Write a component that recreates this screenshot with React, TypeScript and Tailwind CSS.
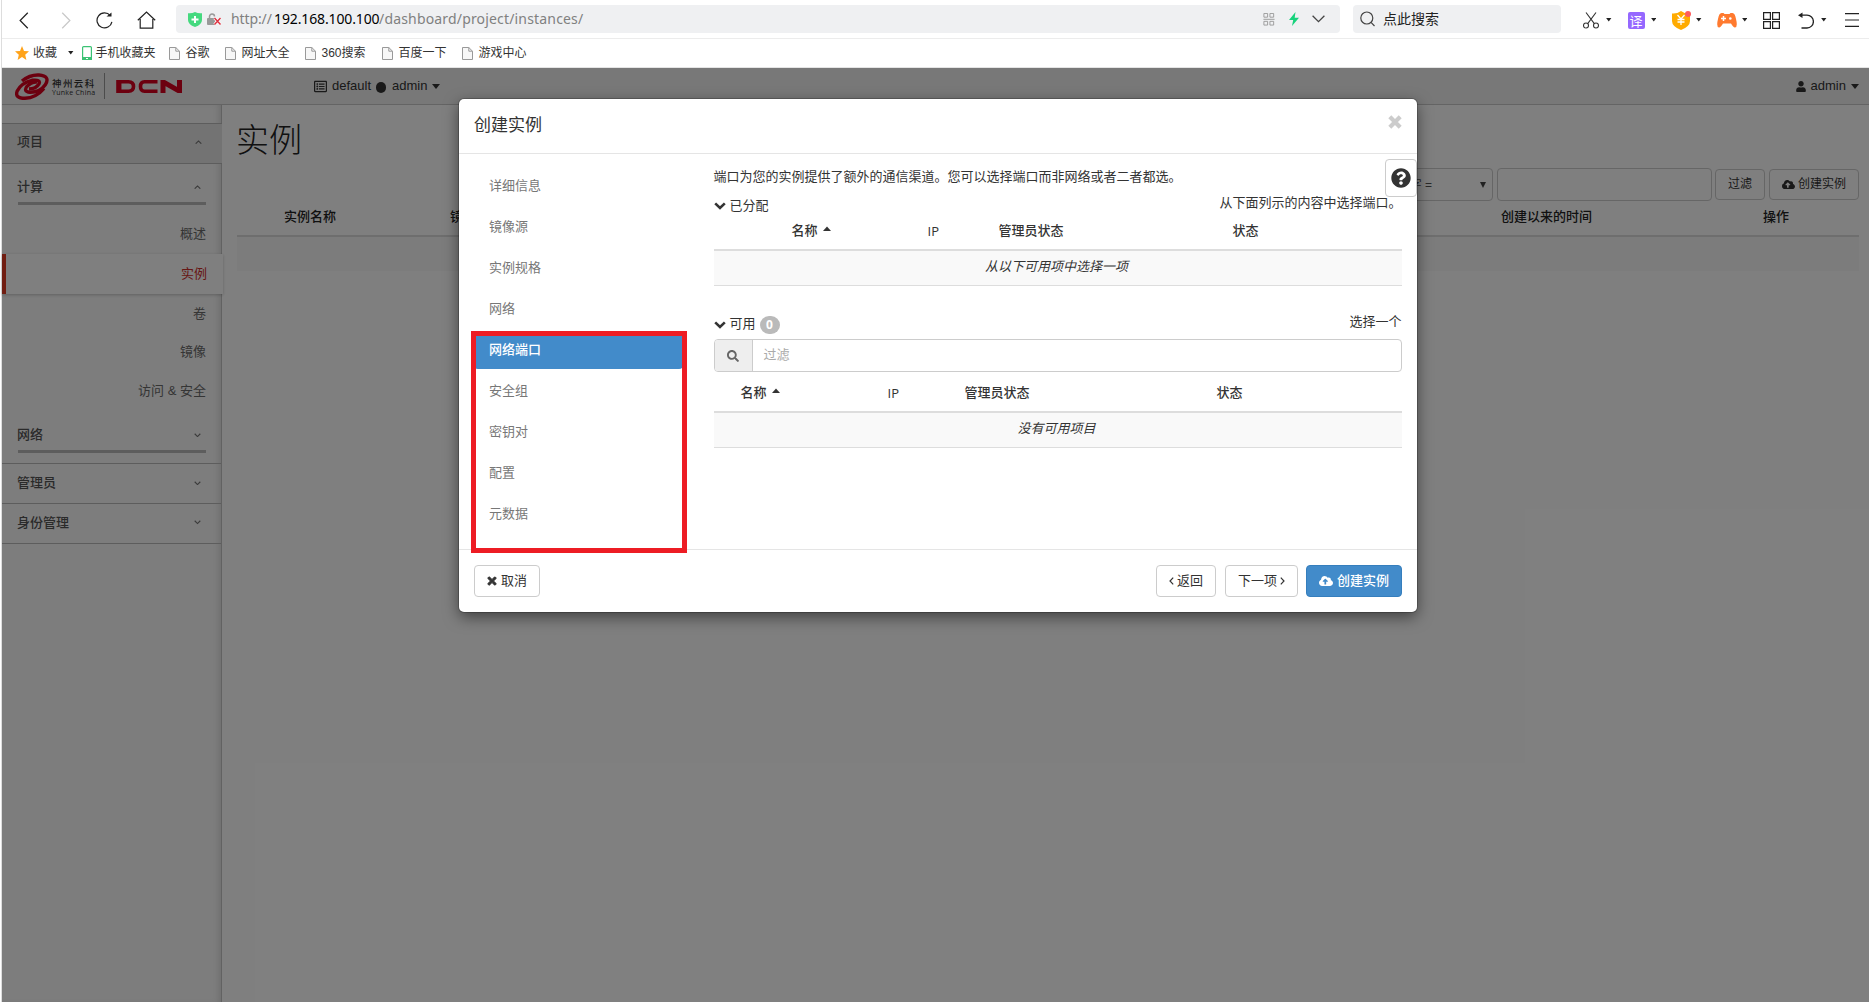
import React from "react";
import {
  FaCloudUploadAlt,
  FaUser,
  FaQuestionCircle,
  FaSearch,
  FaTimes,
  FaRegListAlt,
} from "react-icons/fa";

const CJK = "font-['Liberation_Sans','Noto_Sans_CJK_SC',sans-serif]";

function Caret({ className = "" }: { className?: string }) {
  return (
    <svg viewBox="0 0 6 4" className={`h-[3.5px] w-[5.5px] shrink-0 ${className}`}>
      <path d="M0 0h6L3 4z" fill="#222" />
    </svg>
  );
}

function DocIcon({ className = "" }: { className?: string }) {
  return (
    <svg viewBox="0 0 11 13" className={`h-[13px] w-[11px] shrink-0 ${className}`} fill="#f7f7f7" stroke="#999">
      <path d="M.5.5h6.3l3.7 3.7v8.3H.5z" />
      <path d="M6.8.5v3.7h3.7" fill="none" />
    </svg>
  );
}

function Chevron({ up = false }: { up?: boolean }) {
  return (
    <svg viewBox="0 0 8 5" className="h-[4.5px] w-[7px] shrink-0" fill="none" stroke="#777" strokeWidth="1.3">
      <path d={up ? "M.8 4.2 4 1l3.2 3.2" : "M.8.8 4 4 7.2.8"} />
    </svg>
  );
}

function BoldChevron() {
  return (
    <svg viewBox="0 0 12 8" className="h-[8px] w-[12px] shrink-0" fill="none" stroke="#333" strokeWidth="2.6">
      <path d="M1.2 1.4 6 6l4.8-4.6" />
    </svg>
  );
}

function SortCaret() {
  return (
    <svg viewBox="0 0 8 5" className="mb-[5px] ml-[5px] h-[5px] w-[8px] shrink-0">
      <path d="M0 5 4 .5 8 5z" fill="#333" />
    </svg>
  );
}

function AddressBar() {
  return (
    <div className="flex h-[39px] items-start border-b border-[#ececec] bg-white">
      <svg viewBox="0 0 10 18" className="ml-[17px] mt-[12px] h-[17px] w-[10px]" fill="none" stroke="#222" strokeWidth="1.3">
        <path d="M9 .8.9 9 9 17.2" />
      </svg>
      <svg viewBox="0 0 10 18" className="ml-[32px] mt-[12px] h-[17px] w-[10px]" fill="none" stroke="#c8c8c8" strokeWidth="1.3">
        <path d="M1 .8 9.1 9 1 17.2" />
      </svg>
      <svg viewBox="0 0 17 17" className="ml-[25px] mt-[12px] h-[17px] w-[17px]" fill="none" stroke="#222" strokeWidth="1.2">
        <path d="M15.9 9.8A7.5 7.5 0 1 1 14.3 3.6" />
        <path d="M10.5 4.6h5V.6z" fill="#222" stroke="none" />
      </svg>
      <svg viewBox="0 0 19 18" className="ml-[24px] mt-[11px] h-[18px] w-[19px]" fill="none" stroke="#222" strokeWidth="1.2">
        <path d="M.8 9.3 9.5 1l8.7 8.3M3.2 8v9.2h12.6V8" />
      </svg>

      <div className="ml-[20px] mt-[5px] flex h-[28px] w-[1164px] items-center rounded-[4px] bg-[#eff0f2]">
        <svg viewBox="0 0 14 15" className="ml-[12px] h-[15px] w-[14px]">
          <path d="M0 1.2Q4 1.6 7 0q3 1.6 7 1.2V8q0 4.500-7 7-7-2.500-7-7z" fill="#45d97f" />
          <path d="M7 4v7M3.500 7.500h7" stroke="#fff" strokeWidth="2" />
        </svg>
        <svg viewBox="0 0 15 13" className="ml-[5px] h-[13px] w-[15px]">
          <path d="M2.500 6V3.500a2.500 2.500 0 0 1 5 0" fill="none" stroke="#999" strokeWidth="1.500" />
          <rect x="0" y="5" width="8" height="7" rx="1" fill="#999" />
          <path d="m7.500 5 6 6.500m0-6.500-6 6.500" stroke="#f7f7f7" strokeWidth="3" />
          <path d="m7.500 5 6 6.500m0-6.500-6 6.500" stroke="#e03040" strokeWidth="1.400" />
        </svg>
        <div className="ml-[9px] mt-[-1px] flex w-[780px] whitespace-nowrap font-['Noto_Sans',sans-serif] text-[14px] leading-[20px] text-[#808080]">
          <span className="w-[43px] tracking-[-0.1px]">http://</span>
          <span className="w-[105px] tracking-[-0.13px] text-black">192.168.100.100</span>
          <span className="tracking-[0.17px]">/dashboard/project/instances/</span>
        </div>
        <svg viewBox="0 0 12 14" className="ml-auto h-[13px] w-[12px]" fill="none" stroke="#999">
          <path d="M.5.500h4v4h-4zM7 .500h4v4H7zM.500 9h4v4h-4zM7 9h4v4H7zM0 6.800h12" />
        </svg>
        <svg viewBox="0 0 10 14" className="ml-[14px] h-[14px] w-[10px]">
          <path d="M6.500 0 0 8h4.200L3 14l7-8.300H5.700z" fill="#17d27c" />
        </svg>
        <svg viewBox="0 0 13 8" className="ml-[13px] mr-[15px] h-[8px] w-[13px]" fill="none" stroke="#444" strokeWidth="1.300">
          <path d="m.6.8 5.900 5.900L12.400.8" />
        </svg>
      </div>

      <div className="ml-[13px] mt-[5px] flex h-[28px] w-[208px] items-center rounded-[4px] bg-[#eff0f2]">
        <svg viewBox="0 0 15 16" className="ml-[7px] h-[16px] w-[15px]" fill="none" stroke="#444" strokeWidth="1.200">
          <circle cx="6.800" cy="7" r="6" />
          <path d="m11 11.300 3.500 3.700" />
        </svg>
        <span className={`ml-[8px] text-[14px] leading-[20px] text-[#222] ${CJK}`}>点此搜索</span>
      </div>

      <div className="mt-[3px] flex h-[34px] items-center">
        <svg viewBox="0 0 16 17" className="ml-[22px] h-[17px] w-[16px]" fill="none" stroke="#333" strokeWidth="1.100">
          <circle cx="3" cy="13.500" r="2.500" />
          <circle cx="13" cy="13.500" r="2.500" />
          <path d="M3 .500 11.300 11.700M13 .500 4.700 11.700" />
        </svg>
        <Caret className="ml-[7px]" />
        <span className="ml-[16px] flex h-[17px] w-[17px] items-center justify-center rounded-[2px] bg-[#9568ff] font-['Noto_Sans_CJK_SC',sans-serif] text-[13px] leading-none text-white">
          译
        </span>
        <Caret className="ml-[6px]" />
        <span className="relative ml-[16px] block">
          <svg viewBox="0 0 18 19" className="h-[19px] w-[18px]">
            <path d="M9 0q4 3 9 2.500v7.500q0 5.500-9 9-9-3.500-9-9V2.500Q5 3 9 0z" fill="#ffab00" />
            <path d="M5.500 4 9 8l3.500-4M5.500 8.500h7M5.500 11h7M9 8v6" fill="none" stroke="#fff" strokeWidth="1.300" />
          </svg>
          <span className="absolute right-[-1px] top-0 h-[6px] w-[6px] rounded-full bg-[#ff5c5c]" />
        </span>
        <Caret className="ml-[6px]" />
        <svg viewBox="0 0 20 15" className="ml-[15px] h-[15px] w-[20px]">
          <path d="M4.500 0h2l1 1h5l1-1h2Q18 0 19 6q2 8-1 8.500-1.500.2-4-4H6q-2.500 4.200-4 4Q-1 14 1 6 2 0 4.500 0z" fill="#ff7a2f" />
          <path d="M4 5.500h5M6.500 3v5" stroke="#fff" strokeWidth="1.500" />
          <circle cx="13.300" cy="5.500" r="1.300" fill="#fff" />
        </svg>
        <Caret className="ml-[5px]" />
        <svg viewBox="0 0 17 17" className="ml-[16px] h-[17px] w-[17px]" fill="none" stroke="#222" strokeWidth="1.200">
          <path d="M.6.600h6.800v6.800H.6zM9.600.600h6.800v6.800H9.600zM.6 9.600h6.800v6.800H.6zM9.600 9.600h6.800v6.800H9.600z" />
        </svg>
        <svg viewBox="0 0 16 17" className="ml-[18px] h-[17px] w-[16px]" fill="none" stroke="#222" strokeWidth="1.300">
          <path d="M3 3.200h6a6.300 6.300 0 0 1 0 12.800H3.500" />
          <path d="M0 3.200 4.500.500v5.400z" fill="#222" stroke="none" />
        </svg>
        <Caret className="ml-[7px]" />
        <svg viewBox="0 0 14 14" className="ml-[18px] h-[14px] w-[14px]" stroke="#222" strokeWidth="1.100">
          <path d="M0 .600h14M0 7h14M0 13.400h14" />
        </svg>
      </div>
    </div>
  );
}

const BOOKMARKS: [string, string][] = [
  ["谷歌", "w-[39px]"],
  ["网址大全", "w-[63px]"],
  ["360搜索", "w-[60px]"],
  ["百度一下", "w-[63px]"],
  ["游戏中心", "w-[63px]"],
];

function BookmarkBar() {
  return (
    <div className={`flex h-[29px] items-center whitespace-nowrap border-b border-[#e4e4e4] bg-white text-[12px] text-[#333] ${CJK}`}>
      <svg viewBox="0 0 14 14" className="ml-[13px] h-[14px] w-[14px]">
        <path d="m7 0 2 4.900 5 .400-3.800 3.400L11.400 14 7 11.100 2.600 14l1.200-5.300L0 5.300l5-.4z" fill="#ffa31a" />
      </svg>
      <span className="ml-[4px] w-[24px]">收藏</span>
      <Caret className="ml-[11px]" />
      <svg viewBox="0 0 10 14" className="ml-[8px] h-[14px] w-[10px]">
        <rect x=".6" y=".6" width="8.800" height="12.800" rx="1" fill="#fff" stroke="#3cc274" strokeWidth="1.200" />
        <path d="M0 11h10v3H0z" fill="#3cc274" />
        <path d="M4 12.500h2" stroke="#fff" />
      </svg>
      <span className="ml-[4px] w-[73px]">手机收藏夹</span>
      {BOOKMARKS.map(([label, width]) => (
        <React.Fragment key={label}>
          <DocIcon />
          <span className={`ml-[6px] ${width}`}>{label}</span>
        </React.Fragment>
      ))}
    </div>
  );
}

function Brand() {
  return (
    <div className="flex h-[36px] w-[220px] items-center">
      <svg viewBox="0 0 34 27" className="ml-[13px] h-[27px] w-[34px]" fill="none" stroke="#d8001f">
        <path d="M7 8Q15 1.500 24 2q11.500 1 6.500 9.500Q25 19.500 15 19.300q-7-.8-3-6 4.500-4.800 10-4.300" strokeWidth="3.400" />
        <path d="M29 15.500Q21 25 10 25.300-.5 25.300 2.200 18 6 10 17 7.300q9-1 7 3.500-3 5-10 5.200" strokeWidth="3.400" />
      </svg>
      <div className="ml-[3px] mt-[3px] w-[44px] font-['Noto_Sans_CJK_SC',sans-serif] text-[#333]">
        <div className="whitespace-nowrap text-[9.500px] font-medium leading-[11px] tracking-[1.400px]">神州云科</div>
        <div className="whitespace-nowrap font-['Open_Sans',sans-serif] text-[7px] leading-[8px] tracking-[0.25px]">Yunke China</div>
      </div>
      <div className="ml-[8px] h-[26px] w-px bg-[#999]" />
      <svg viewBox="0 0 67 13" className="ml-[10px] h-[13px] w-[68px]" role="img" aria-label="DCN" fill="none" stroke="#d8001f" strokeWidth="3.600">
        <path d="M1.800 1.800H13q5 0 5 4.700t-5 4.700H4V1.800M42 1.800H29q-4 0-4 4.700t4 4.700h13" />
        <path d="M3.200 0v13M47.500 13V1.800L64 11.200V0" strokeWidth="5" />
      </svg>
    </div>
  );
}

function SectionHead({ label, up = false }: { label: string; up?: boolean }) {
  return (
    <div className="flex items-center justify-between pl-[15px] pr-[20.500px] text-[#555]">
      <span className="font-medium">{label}</span>
      <Chevron up={up} />
    </div>
  );
}

function SideLink({ label }: { label: string }) {
  return <div className="flex h-[38.5px] items-center justify-end pr-[15px]">{label}</div>;
}

function Sidebar() {
  return (
    <div className="w-[220px] shrink-0 border-r border-[#c4c4c4] bg-[#fafafa] text-[13px] leading-[18px] text-[#6a6a6a] shadow-[inset_-5px_0_6px_-3px_rgba(0,0,0,0.12)]">
      <div className="h-[18px]" />
      <div className="h-[41px] w-[220px] border-y border-[#bbb] bg-[#e6e6e6] pt-[9px]">
        <SectionHead label="项目" up />
      </div>
      <div className="pt-[14px]">
        <SectionHead label="计算" up />
        <div className="ml-4 mt-[6px] h-[3px] w-[188px] bg-[#bbb]" />
      </div>
      <div className="mt-[10px]">
        <SideLink label="概述" />
      </div>
      <div className="relative flex h-[40px] w-[221px] items-center justify-end border-l-4 border-[#e03a22] bg-white pr-[16px] text-[#cf2f2a] shadow-[0_1px_3px_rgba(0,0,0,0.22)]">
        实例
      </div>
      <div className="h-px" />
      <SideLink label="卷" />
      <SideLink label="镜像" />
      <SideLink label="访问 & 安全" />
      <div className="pt-[16px]">
        <SectionHead label="网络" />
        <div className="ml-4 mt-[6px] h-[3px] w-[188px] bg-[#bbb]" />
      </div>
      <div className="mt-[10px] h-[40px] border-t border-[#bbb] pt-[10px]">
        <SectionHead label="管理员" />
      </div>
      <div className="h-[41px] border-y border-[#bbb] pt-[9.500px]">
        <SectionHead label="身份管理" />
      </div>
    </div>
  );
}

function Dashboard() {
  return (
    <div className={`flex h-[934px] flex-col bg-white text-[13px] text-[#333] ${CJK}`}>
      <div className="flex h-[37px] shrink-0 items-start border-b border-[#c8c8c8] bg-[#f0f0f0]">
        <Brand />
        <div className="ml-[92px] flex h-[35px] items-center pt-px text-[13px]">
          <FaRegListAlt className="h-[13px] w-[13px]" />
          <span className="ml-[5px]">default</span>
          <span className="ml-[5px] mt-[2px] h-[11px] w-[10px] rounded-full bg-[#333]" />
          <span className="ml-[6px]">admin</span>
          <svg viewBox="0 0 8 5" className="ml-[5px] h-[5px] w-[8px]">
            <path d="M0 0h8L4 5z" fill="#333" />
          </svg>
        </div>
        <div className="ml-auto mr-[10px] flex h-[35px] items-center pt-px">
          <FaUser className="h-[11px] w-[10px]" />
          <span className="ml-[5px]">admin</span>
          <svg viewBox="0 0 8 5" className="ml-[5px] h-[5px] w-[8px]">
            <path d="M0 0h8L4 5z" fill="#333" />
          </svg>
        </div>
      </div>
      <div className="flex min-h-0 flex-1">
        <Sidebar />
        <div className="min-w-0 flex-1 pl-[15px] pr-[10px]">
          <h1 className="-ml-px h-[63px] pt-[14px] text-[33px] font-light leading-[44px] text-[#222]">实例</h1>
          <div className="flex h-[33px] items-center justify-end text-[12px]">
            <div className="flex h-[33px] w-[190px] items-center justify-end rounded-[4px] border border-[#ccc] pr-[6px] text-[#555]">
              <span className="mr-[48px]">名字 =</span>
              <svg viewBox="0 0 6 6" className="h-[6px] w-[6px]">
                <path d="M0 0h6L3 6z" fill="#444" />
              </svg>
            </div>
            <div className="ml-[4px] h-[33px] w-[215px] rounded-[4px] border border-[#ccc]" />
            <div className="ml-[3px] flex h-[31px] w-[50px] items-center justify-center rounded-[4px] border border-[#ccc] pb-px">过滤</div>
            <div className="ml-[4px] flex h-[31px] w-[90px] items-center justify-center rounded-[4px] border border-[#ccc] pb-px">
              <FaCloudUploadAlt className="mr-[3px] h-[13px] w-[13px]" />
              创建实例
            </div>
          </div>
          <div className="grid h-[36px] grid-cols-[166px_1051px_262px_1fr] items-center border-b-2 border-[#ddd] pb-[2px] pl-[47px] font-medium text-[#222]">
            <span>实例名称</span>
            <span>镜像</span>
            <span>创建以来的时间</span>
            <span>操作</span>
          </div>
          <div className="h-[34px] bg-[#f9f9f9]" />
        </div>
      </div>
    </div>
  );
}

const STEPS = ["详细信息", "镜像源", "实例规格", "网络", "网络端口", "安全组", "密钥对", "配置", "元数据"];

function TableBlock({ head, empty }: { head: React.ReactNode; empty: string }) {
  return (
    <>
      {head}
      <div className="flex h-[35px] items-center justify-center border-b border-[#ddd] bg-[#f9f9f9] pb-[2px] pr-[2px] italic">
        <span>{empty}</span>
      </div>
    </>
  );
}

function LaunchModal() {
  return (
    <div className={`flex h-[513px] w-[958px] flex-col rounded-[5px] bg-white text-[13px] leading-[18px] text-[#333] shadow-[0_0_0_1px_rgba(0,0,0,0.2),0_5px_15px_rgba(0,0,0,0.5)] ${CJK}`}>
      <div className="flex h-[55px] shrink-0 justify-between border-b border-[#e5e5e5] pl-[15px] pr-[15px]">
        <h4 className="mt-[15px] text-[17px] leading-[24px]">创建实例</h4>
        <svg viewBox="0 0 14 14" className="mt-[15.500px] h-[14px] w-[14px]" stroke="#ccc" strokeWidth="4.200">
          <path d="m1.800 1.800 10.400 10.400m0-10.400L1.800 12.200" />
        </svg>
      </div>

      <div className="relative flex h-[396px] shrink-0 border-b border-[#e5e5e5]">
        <div className="w-[254.500px] shrink-0 pl-[15px] pt-[13px] text-[#777]">
          {STEPS.map((step) => (
            <div
              key={step}
              className={
                step === "网络端口"
                  ? "mb-[2px] flex h-[38.900px] w-[209px] items-center rounded-[4px] bg-[#428bca] pl-[15px] font-medium text-white"
                  : "mb-[2px] flex h-[38.900px] items-center pl-[15px]"
              }
            >
              {step}
            </div>
          ))}
        </div>
        <div className="absolute left-[12px] top-[177px] h-[222px] w-[216px] border-[5px] border-[#ed1c24]" />

        <div className="w-[688px] pt-[14px]">
          <p>端口为您的实例提供了额外的通信渠道。您可以选择端口而非网络或者二者都选。</p>
          <div className="mt-[8px] flex h-[24px] justify-between">
            <div className="flex items-center">
              <BoldChevron />
              <span className="ml-[4px] mt-[-1px]">已分配</span>
            </div>
            <span>从下面列示的内容中选择端口。</span>
          </div>
          <TableBlock
            empty="从以下可用项中选择一项"
            head={
              <div className="mt-px grid h-[32px] grid-cols-[136px_71px_234px_1fr] border-b-2 border-[#ddd] pl-[78px] pt-[3px] font-medium">
                <span className="flex items-center self-start leading-[18px]">
                  名称
                  <SortCaret />
                </span>
                <span className="font-['Open_Sans',sans-serif]">IP</span>
                <span>管理员状态</span>
                <span>状态</span>
              </div>
            }
          />
          <div className="mt-[28px] flex h-[22px] justify-between">
            <div className="flex items-center">
              <BoldChevron />
              <span className="ml-[4px] mt-[-2px]">可用</span>
              <span className="ml-[4px] flex h-[18px] w-[20px] items-center justify-center rounded-[9px] bg-[#bababa] font-['Open_Sans',sans-serif] text-[12px] font-bold text-white">
                0
              </span>
            </div>
            <span className="mt-[-1px]">选择一个</span>
          </div>
          <div className="mt-[3px] flex h-[33px] rounded-[4px] border border-[#ccc]">
            <div className="flex w-[38px] items-center justify-center rounded-l-[3px] border-r border-[#ccc] bg-[#eee]">
              <FaSearch className="h-[12px] w-[12px] text-[#666]" />
            </div>
            <span className="ml-[11px] mt-[6px] text-[#aaa]">过滤</span>
          </div>
          <TableBlock
            empty="没有可用项目"
            head={
              <div className="grid h-[41px] grid-cols-[147px_77px_252px_1fr] border-b-2 border-[#ddd] pl-[27px] pt-[12px] font-medium">
                <span className="flex items-center self-start">
                  名称
                  <SortCaret />
                </span>
                <span className="font-['Open_Sans',sans-serif]">IP</span>
                <span>管理员状态</span>
                <span>状态</span>
              </div>
            }
          />
        </div>

        <div className="absolute right-0 top-[5px] flex h-[38px] w-[32px] items-center justify-center rounded-[4px] border border-[#ccc] bg-white">
          <FaQuestionCircle className="h-[20px] w-[20px]" />
        </div>
      </div>

      <div className="flex h-[62px] items-center px-[15px] [&>*]:flex [&>*]:h-[32px] [&>*]:items-center [&>*]:justify-center [&>*]:rounded-[4px] [&>*]:border [&>*]:pb-px">
        <div className="w-[66px] border-[#ccc]">
          <FaTimes className="mr-[4px] h-[12px] w-[10px]" strokeWidth="40" stroke="#333" />
          取消
        </div>
        <div className="ml-auto w-[60px] border-[#ccc]">
          <svg viewBox="0 0 5 8" className="mr-[3px] h-[8px] w-[5px]" fill="none" stroke="#333" strokeWidth="1.200">
            <path d="M4.200.600 1 4l3.200 3.400" />
          </svg>
          返回
        </div>
        <div className="ml-[9px] w-[73px] border-[#ccc]">
          下一项
          <svg viewBox="0 0 5 8" className="ml-[3px] h-[8px] w-[5px]" fill="none" stroke="#333" strokeWidth="1.200">
            <path d="M.8.600 4 4 .8 7.400" />
          </svg>
        </div>
        <div className="ml-[8px] w-[96px] border-[#357ebd] bg-[#428bca] font-medium text-white">
          <FaCloudUploadAlt className="mr-[4px] h-[14px] w-[14px]" />
          创建实例
        </div>
      </div>
    </div>
  );
}

export default function App() {
  return (
    <div className="h-[1002px] w-[1869px] overflow-hidden bg-white">
      <div className="ml-px border-l border-[#ddd]">
        <AddressBar />
        <BookmarkBar />
        <div className="relative">
          <Dashboard />
          <div className="absolute inset-0 z-10 bg-black/50 pl-[457px] pt-[31px]">
            <LaunchModal />
          </div>
        </div>
      </div>
    </div>
  );
}
